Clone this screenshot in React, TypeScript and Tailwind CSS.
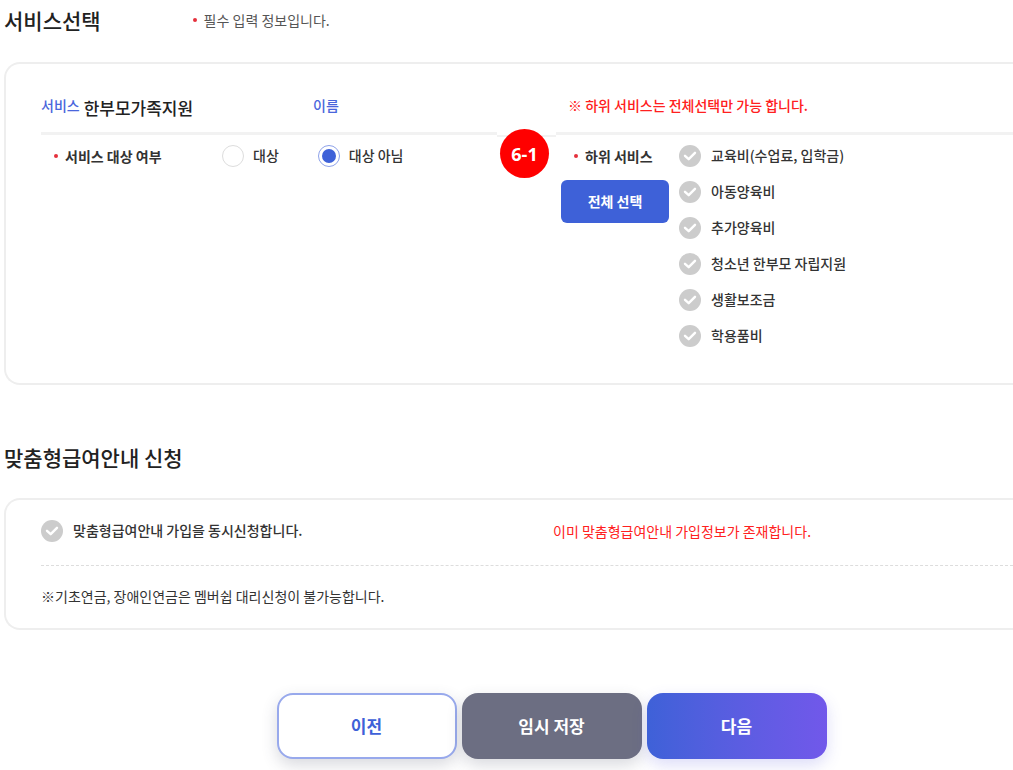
import { useState } from "react";

const subServices = [
    "교육비(수업료, 입학금)",
    "아동양육비",
    "추가양육비",
    "청소년 한부모 자립지원",
    "생활보조금",
    "학용품비",
];

function Required() {
    return <span className="size-1 shrink-0 rounded-full bg-[#e5303c]" />;
}

function CheckItem({ label }: { label: string }) {
    return (
        <label className="flex h-[22px] items-center gap-[10px]">
            <span className="relative flex size-[22px] shrink-0">
                <input
                    type="checkbox"
                    className="size-[22px] appearance-none rounded-full bg-[#cccccc] checked:bg-[#3e61d8]"
                />
                <svg
                    viewBox="0 0 22 22"
                    className="pointer-events-none absolute inset-0 size-[22px] fill-none stroke-white"
                    strokeWidth="2.4"
                    strokeLinecap="round"
                    strokeLinejoin="round"
                >
                    <path d="M6 10.8 9.7 14.2 16 7.8" />
                </svg>
            </span>
            <span className="pb-0.5">{label}</span>
        </label>
    );
}

function RadioItem({ label, checked, onSelect }: { label: string; checked: boolean; onSelect: () => void }) {
    return (
        <label className="flex h-[22px] items-center gap-[9px]">
            <input
                type="radio"
                name="target"
                checked={checked}
                onChange={onSelect}
                className="size-[22px] shrink-0 appearance-none rounded-full border border-[#dddddd] bg-white bg-clip-content p-[3px] checked:border-[#8ea2ea] checked:bg-[#3e61d8]"
            />
            <span className="pb-0.5">{label}</span>
        </label>
    );
}

export default function App() {
    const [target, setTarget] = useState("대상 아님");

    return (
        <main className="bg-white pl-1 font-['Noto_Sans_CJK_KR',sans-serif] text-sm leading-5 font-medium text-[#333333]">
            <header className="flex h-10 items-center gap-[92px]">
                <h1 className="text-[21px] leading-7 text-[#222222]">서비스선택</h1>
                <p className="flex items-center gap-[7px] font-normal text-[#555555]">
                    <Required />
                    필수 입력 정보입니다.
                </p>
            </header>

            <section className="mt-[22px] rounded-l-2xl border-2 border-r-0 border-[#eeeeee] pt-7 pb-9 pl-[35px]">
                <div className="grid h-[43px] grid-cols-[272px_255px_1fr] border-b-3 border-[#f2f2f2] pt-[3px]">
                    <p className="flex gap-1">
                        <span className="text-[#4a66dc]">서비스</span>
                        <span className="text-[17px] leading-[26px] text-[#222222]">한부모가족지원</span>
                    </p>
                    <p className="text-[#4a66dc]">이름</p>
                    <p className="text-[#ff2020]">※ 하위 서비스는 전체선택만 가능 합니다.</p>
                </div>

                <div className="relative grid grid-cols-[181px_339px_118px_1fr] pt-[10px]">
                    <div className="absolute -top-[3px] left-[456px] flex w-[59px] justify-center bg-white pr-1">
                        <span className="absolute inset-x-0 top-[3px] h-[2px] bg-[#f2f2f2]" />
                        <span className="relative -mt-[3px] flex size-[49px] items-center justify-center rounded-full bg-[#ff0000] font-['Open_Sans',sans-serif] text-lg font-bold text-white">
                            6-1
                        </span>
                    </div>

                    <p className="flex h-[22px] items-center gap-[7px] pl-[13px] font-bold">
                        <Required />
                        서비스 대상 여부
                    </p>
                    <div className="flex gap-[39px]" role="radiogroup" aria-label="서비스 대상 여부">
                        {["대상", "대상 아님"].map((label) => (
                            <RadioItem
                                key={label}
                                label={label}
                                checked={target === label}
                                onSelect={() => setTarget(label)}
                            />
                        ))}
                    </div>
                    <div>
                        <p className="flex h-[22px] items-center gap-[7px] pl-[13px] font-bold">
                            <Required />
                            하위 서비스
                        </p>
                        <button
                            type="button"
                            className="mt-[13px] h-[43px] w-[108px] rounded-md bg-[#3e61d8] pb-0.5 font-bold text-white"
                        >
                            전체 선택
                        </button>
                    </div>
                    <div className="flex flex-col gap-[14px]">
                        {subServices.map((name) => (
                            <CheckItem key={name} label={name} />
                        ))}
                    </div>
                </div>
            </section>

            <h2 className="mt-[58px] text-[21px] leading-7 text-[#222222]">맞춤형급여안내 신청</h2>

            <section className="mt-[27px] rounded-l-2xl border-2 border-r-0 border-[#eeeeee] pl-[35px]">
                <div className="grid h-[66px] grid-cols-[512px_1fr] items-center border-b border-dashed border-[#dddddd] pb-[3px]">
                    <CheckItem label="맞춤형급여안내 가입을 동시신청합니다." />
                    <p className="font-normal text-[#ff2020]">이미 맞춤형급여안내 가입정보가 존재합니다.</p>
                </div>
                <p className="flex h-[62px] items-center pb-0.5 font-normal">
                    ※기초연금, 장애인연금은 멤버쉽 대리신청이 불가능합니다.
                </p>
            </section>

            <div className="mt-[63px] flex justify-center gap-[5px] pb-[11px] pl-[86px] text-[17px] font-bold">
                <button
                    type="button"
                    className="h-[66px] w-[180px] rounded-2xl border-2 border-[#98a9ec] bg-white text-[#3e61d8] shadow-[0_6px_16px_rgba(60,65,90,0.2)]"
                >
                    이전
                </button>
                <button
                    type="button"
                    className="h-[66px] w-[180px] rounded-2xl bg-[#6c6e82] text-white shadow-[0_6px_16px_rgba(60,65,90,0.2)]"
                >
                    임시 저장
                </button>
                <button
                    type="button"
                    className="h-[66px] w-[180px] rounded-2xl bg-linear-to-r from-[#3e61d8] to-[#7158ea] text-white shadow-[0_6px_16px_rgba(80,80,220,0.2)]"
                >
                    다음
                </button>
            </div>
        </main>
    );
}
